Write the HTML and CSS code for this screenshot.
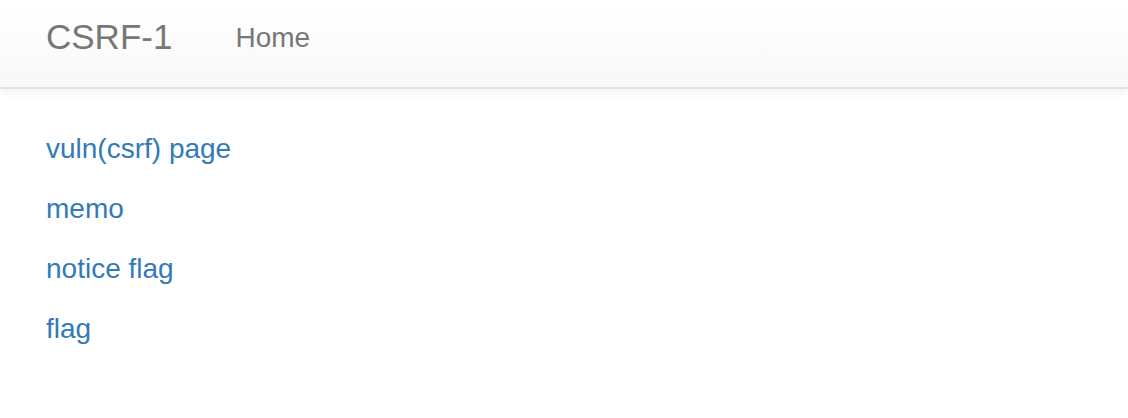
FILE: index.html
```html
<!DOCTYPE html>
<html lang="en">
<head>
  <meta charset="UTF-8">
  <title>CSRF-1</title>
  <link rel="stylesheet" href="styles.css">
</head>
<body>
  <nav class="navbar">
    <a class="navbar-brand" href="/">CSRF-1</a>
    <ul class="nav">
      <li><a href="/">Home</a></li>
    </ul>
  </nav>

  <div class="container">
    <p><a href="/vuln">vuln(csrf) page</a></p>
    <p><a href="/memo">memo</a></p>
    <p><a href="/admin/notice_flag">notice flag</a></p>
    <p><a href="/flag">flag</a></p>
  </div>
</body>
</html>
```

FILE: styles.css
```css
body {
  margin: 0;
  font-family: "Liberation Sans", Arial, sans-serif;
  font-size: 28px;
  color: #333;
  background: #fff;
}
a {
  color: #337ab7;
  text-decoration: none;
}
.navbar {
  display: flex;
  align-items: center;
  height: 76px;
  padding: 0 46px 11px;
  background-image: linear-gradient(to bottom, #fff 0, #f8f8f8 100%);
  border-bottom: 2px solid #e3e3e3;
  box-shadow: 0 2px 10px rgba(0, 0, 0, .075);
}
.navbar-brand {
  font-size: 35px;
  color: #777;
  margin-right: 63px;
  margin-top: -2px;
}
.nav {
  list-style: none;
  margin: 0;
  padding: 0;
}
.nav a {
  color: #777;
}
.container {
  display: flex;
  flex-direction: column;
  gap: 28px;
  padding: 44px 46px;
}
.container p {
  margin: 0;
  line-height: 32px;
}
```
